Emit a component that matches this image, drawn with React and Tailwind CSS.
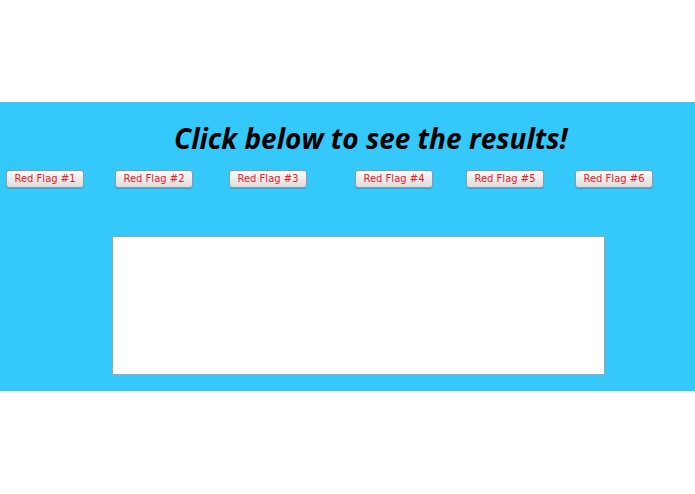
const FLAGS = [
  { label: 'Red Flag #1', cls: 'ml-[6px]' },
  { label: 'Red Flag #2', cls: 'ml-[31px]' },
  { label: 'Red Flag #3', cls: 'ml-[36px]' },
  { label: 'Red Flag #4', cls: 'ml-[48px]' },
  { label: 'Red Flag #5', cls: 'ml-[33px]' },
  { label: 'Red Flag #6', cls: 'ml-[31px]' },
];

export default function App() {
  return (
    <div className="h-[494px] w-[695px] bg-white">
      <div className="h-[102px]" />
      <div className="flex h-[289px] flex-col bg-[#35c8fb]">
        <h1
          className="mt-[17px] pl-[174px] text-[28px] font-bold italic leading-[38px] text-black"
          style={{ fontFamily: '"Open Sans", "DejaVu Sans", sans-serif' }}
        >
          Click below to see the results!
        </h1>
        <div className="mt-[13px] flex">
          {FLAGS.map((f) => (
            <button
              key={f.label}
              type="button"
              className={`${f.cls} h-[18px] w-[78px] rounded-[3px] border border-[#8c9aa4] bg-gradient-to-b from-[#fbfbfb] to-[#dcdcdc] text-[10px] leading-[16px] text-[#e8202a] shadow-[0_1px_0_rgba(0,0,0,0.15)]`}
              style={{ fontFamily: '"DejaVu Sans", sans-serif' }}
            >
              {f.label}
            </button>
          ))}
        </div>
        <div className="ml-[112px] mt-[48px] h-[139px] w-[493px] border border-[#9aa6ae] bg-white" />
      </div>
    </div>
  );
}
